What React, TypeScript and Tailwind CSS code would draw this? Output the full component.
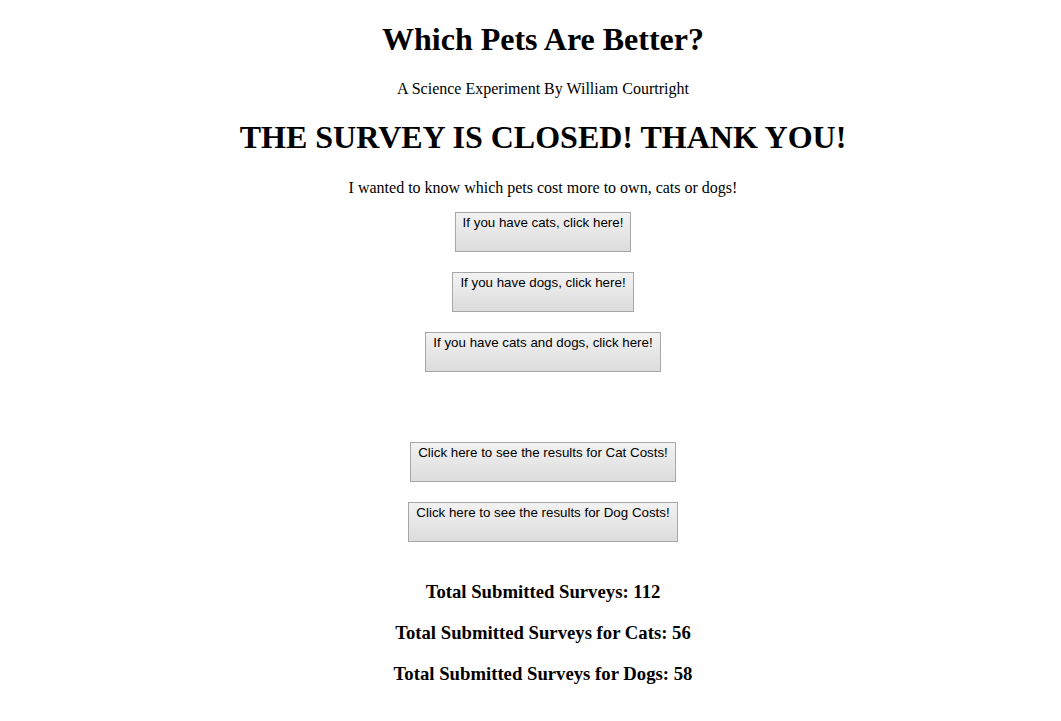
const PET_BUTTONS = ['If you have cats, click here!', 'If you have dogs, click here!', 'If you have cats and dogs, click here!'];
const RESULT_BUTTONS = ['Click here to see the results for Cat Costs!', 'Click here to see the results for Dog Costs!'];
const TOTALS = ['Total Submitted Surveys: 112', 'Total Submitted Surveys for Cats: 56', 'Total Submitted Surveys for Dogs: 58'];

function OldButton({ label }: { label: string }) {
  return (
    <button
      type="button"
      className="flex h-[40px] items-start border border-[#a6a6a6] bg-gradient-to-b from-[#f2f2f2] to-[#dcdcdc] px-[7px] pt-[2px] text-[13.33px] leading-[16px] text-black"
      style={{ fontFamily: '"Liberation Sans", Arial, sans-serif' }}
    >
      {label}
    </button>
  );
}

export default function App() {
  return (
    <div
      className="min-h-[721px] bg-white pl-[33px] pr-2 text-center text-black"
      style={{ fontFamily: '"Liberation Serif", "Times New Roman", serif' }}
    >
      <div className="flex flex-col items-center pt-[21px]">
        <h1 className="text-[32px] font-bold leading-[37px]">Which Pets Are Better?</h1>
        <p className="mt-[22px] text-[16px] leading-[18px]">A Science Experiment By William Courtright</p>
        <h1 className="mt-[21px] text-[32px] font-bold leading-[37px]">THE SURVEY IS CLOSED! THANK YOU!</h1>
        <p className="mt-[23px] text-[16px] leading-[18px]">I wanted to know which pets cost more to own, cats or dogs!</p>

        {/* survey buttons */}
        <div className="mt-[15px] flex flex-col items-center gap-[20px]">
          {PET_BUTTONS.map((b) => (
            <OldButton key={b} label={b} />
          ))}
        </div>

        {/* results */}
        <div className="mt-[70px] flex flex-col items-center gap-[20px]">
          {RESULT_BUTTONS.map((b) => (
            <OldButton key={b} label={b} />
          ))}
        </div>

        <div className="mt-[39px] flex flex-col items-center gap-[19px] pb-6">
          {TOTALS.map((t) => (
            <h3 key={t} className="text-[18.72px] font-bold leading-[22px]">{t}</h3>
          ))}
        </div>
      </div>
    </div>
  );
}
